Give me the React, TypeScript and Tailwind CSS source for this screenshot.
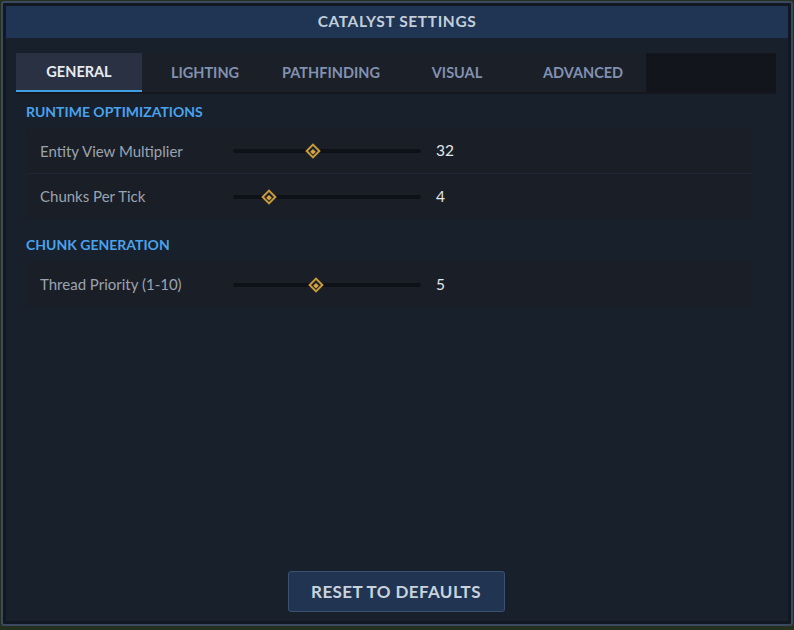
import React from "react";

type Setting = {
  label: string;
  value: number;
  pos: number; // thumb position along the track, 0..1
};

const tabs = ["GENERAL", "LIGHTING", "PATHFINDING", "VISUAL", "ADVANCED"];

const sections: { title: string; rows: Setting[] }[] = [
  {
    title: "RUNTIME OPTIMIZATIONS",
    rows: [
      { label: "Entity View Multiplier", value: 32, pos: 0.426 },
      { label: "Chunks Per Tick", value: 4, pos: 0.194 },
    ],
  },
  {
    title: "CHUNK GENERATION",
    rows: [{ label: "Thread Priority (1-10)", value: 5, pos: 0.444 }],
  },
];

function Slider({ pos }: { pos: number }) {
  return (
    <div className="relative h-[14px] w-[188px]">
      <div className="absolute left-0 right-0 top-[5px] h-[4px] rounded-full bg-[#0e1117]" />
      {/* diamond thumb */}
      <div
        className="absolute top-[7px] -translate-x-1/2 -translate-y-1/2"
        style={{ left: `${pos * 100}%` }}
      >
        <div className="flex h-[11px] w-[11px] rotate-45 items-center justify-center border-2 border-[#c99b3a] bg-[#1b1f28]">
          <div className="h-[4px] w-[4px] bg-[#d4a540]" />
        </div>
      </div>
    </div>
  );
}

function Row({ s, last }: { s: Setting; last: boolean }) {
  return (
    <div
      className={`flex h-[45px] items-center bg-[#1a1e27] ${
        last ? "" : "border-b border-[#1c2634]"
      }`}
    >
      <span className="w-[207px] pl-[14px] text-[15px] text-[#9ba3b0]">{s.label}</span>
      <Slider pos={s.pos} />
      <span className="pl-[15px] text-[15.5px] text-[#e2e6ec]">{s.value}</span>
    </div>
  );
}

export default function App() {
  return (
    <div
      className="h-[630px] w-[794px] overflow-hidden bg-[#26301f]"
      style={{ fontFamily: "Lato, 'Open Sans', sans-serif" }}
    >
      {/* window frame */}
      <div className="ml-[1px] mt-[1px] h-[625px] w-[792px] rounded-[3px] border-[2px] border-[#3a4960] bg-[#111821] p-[3px]">
        <div className="flex h-full flex-col bg-[#18202b]">
          {/* title bar */}
          <div className="flex h-[32px] shrink-0 items-center justify-center bg-[#1f3553]">
            <span className="text-[15.5px] font-bold tracking-[0.6px] text-[#c3ceda]">
              CATALYST SETTINGS
            </span>
          </div>

          <div className="flex flex-1 flex-col pl-[10px] pr-[12px] pt-[15px]">
            {/* tabs */}
            <div className="flex h-[41px] border-b-[2px] border-[#14171e] bg-[#1b1f28]">
              {tabs.map((t, i) => (
                <div
                  key={t}
                  className={`flex w-[126px] items-center justify-center text-[14.5px] font-bold ${
                    i === 0
                      ? "border-b-[2px] border-[#3f9fe2] bg-[#2a3142] text-[#e6ebf2]"
                      : "text-[#8191b0]"
                  }`}
                >
                  {t}
                </div>
              ))}
              <div className="flex-1 bg-[#12151c]" />
            </div>

            {/* sections */}
            <div className="pl-[10px] pr-[24px]">
              {sections.map((sec, si) => (
                <div key={sec.title} className={si === 0 ? "pt-[5px]" : "pt-[13px]"}>
                  <div className="h-[26px] text-[14px] font-bold leading-[26px] text-[#4aa2ee]">
                    {sec.title}
                  </div>
                  <div className="mt-[4px]">
                    {sec.rows.map((r, ri) => (
                      <Row key={r.label} s={r} last={ri === sec.rows.length - 1} />
                    ))}
                  </div>
                </div>
              ))}
            </div>

            <div className="flex-1" />

            {/* footer */}
            <div className="flex justify-center pb-[9px]">
              <button className="h-[41px] w-[217px] rounded-[3px] border border-[#3b5171] bg-[#213552] text-[17px] font-bold tracking-[0.4px] text-[#c8d3df]">
                RESET TO DEFAULTS
              </button>
            </div>
          </div>
        </div>
      </div>
    </div>
  );
}
